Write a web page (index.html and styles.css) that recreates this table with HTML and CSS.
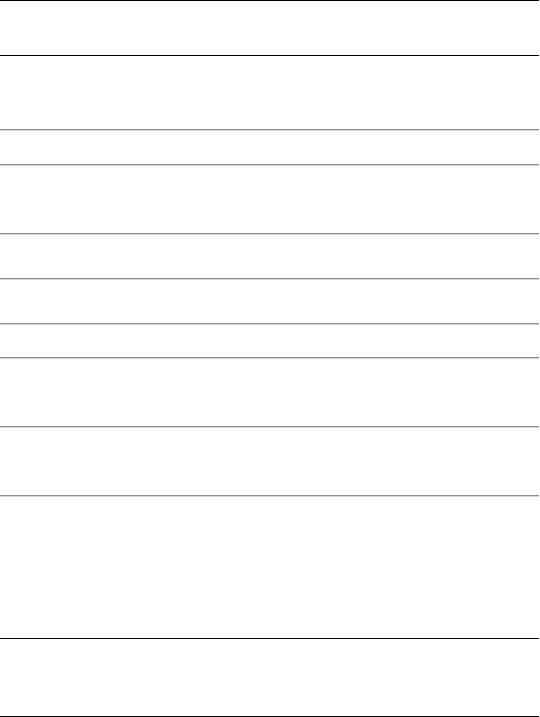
FILE: index.html
```html
<!DOCTYPE html>
<html>
<head>
<meta charset="utf-8">
<link rel="stylesheet" href="styles.css">
</head>
<body>
<div class="page">
  <header class="top"></header>
  <div class="row h73"></div>
  <hr class="sep">
  <div class="row h33"></div>
  <hr class="sep">
  <div class="row h67"></div>
  <hr class="sep">
  <div class="row h43"></div>
  <hr class="sep">
  <div class="row h43"></div>
  <hr class="sep">
  <div class="row h32"></div>
  <hr class="sep">
  <div class="row h67"></div>
  <hr class="sep">
  <div class="row h67"></div>
  <hr class="sep">
  <div class="row h141"></div>
  <footer class="bottom"></footer>
</div>
</body>
</html>
```

FILE: styles.css
```css
html, body {
  margin: 0;
  padding: 0;
  background: #fff;
  font-family: "Liberation Sans", Arial, sans-serif;
}
.page {
  width: 539px;
  display: flex;
  flex-direction: column;
}
.top {
  height: 54px;
  border-top: 1px solid #000;
  border-bottom: 1px solid #000;
}
.row { flex: none; }
.h73 { height: 73px; }
.h33 { height: 33px; }
.h67 { height: 67px; }
.h43 { height: 43px; }
.h32 { height: 32px; }
.h141 { height: 141px; }
.sep {
  margin: 0;
  height: 0;
  border: 0;
  border-top: 1px solid #8c8c8c;
  border-bottom: 1px solid #d6d6d6;
}
.bottom {
  height: 77px;
  border-top: 1px solid #000;
  border-bottom: 1px solid #000;
}
```
